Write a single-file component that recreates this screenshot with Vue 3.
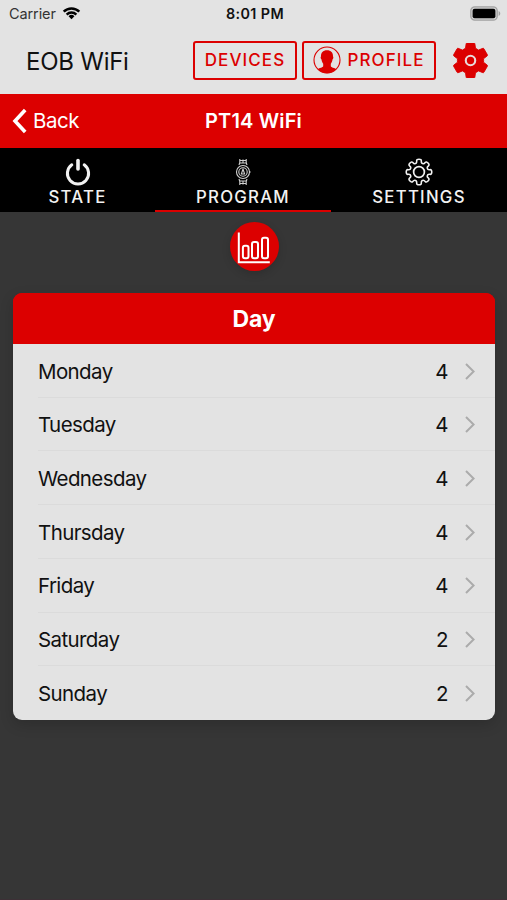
<template>
  <div class="app">
    <div class="status-bar">
      <div class="carrier">
        <span class="carrier-name">Carrier</span>
        <svg class="wifi" viewBox="0 0 20 14">
          <path d="M1.8 5.6a11.6 11.6 0 0 1 16.4 0" />
          <path d="M4.9 8.7a7.2 7.2 0 0 1 10.2 0" />
          <path class="wifi-dot" d="M10 13.6L6.9 10.5a4.4 4.4 0 0 1 6.2 0z" />
        </svg>
      </div>
      <span class="clock">8:01 PM</span>
      <svg class="battery" viewBox="0 0 31 15">
        <rect x="0.8" y="0.8" width="26.4" height="13.4" rx="4" fill="#d0d0d0" stroke="#a2a2a2" stroke-width="1.3" />
        <rect x="2.6" y="2.7" width="22.8" height="9.6" rx="2" fill="#000" />
        <path d="M28.6 5c2.2.9 2.2 4.1 0 5z" fill="#a2a2a2" />
      </svg>
    </div>

    <header class="header">
      <h1 class="title">EOB WiFi</h1>
      <button class="outline-btn devices">
        <span class="btn-text">DEVICES</span>
      </button>
      <button class="outline-btn profile">
        <svg class="avatar" viewBox="0 0 28 28">
          <circle cx="14" cy="14" r="13" fill="none" stroke="currentColor" stroke-width="1.1" />
          <path
            d="M14 4.200c4 0 6.200 2.400 6 6.200.6.300.4 2.500-.5 3-.3 2-1 3.400-1.700 4.300v2.600c.5 1.400 3.800 1.500 5.500 3A13 13 0 0 1 14 27.300a13 13 0 0 1-9.300-4c1.700-1.500 5-1.600 5.500-3v-2.600c-.7-.9-1.400-2.300-1.700-4.300-.9-.5-1.100-2.700-.5-3-.2-3.800 2-6.200 6-6.200z"
            fill="currentColor"
          />
        </svg>
        <span class="btn-text">PROFILE</span>
      </button>
      <svg class="cog" viewBox="2 2 20 20">
        <path
          d="M19.430 12.980c.040-.320.070-.640.070-.980s-.030-.660-.070-.980l2.110-1.650c.190-.150.240-.420.120-.640l-2-3.460c-.120-.220-.390-.300-.610-.220l-2.490 1c-.520-.400-1.080-.730-1.690-.980l-.380-2.650C14.460 2.180 14.250 2 14 2h-4c-.250 0-.460.180-.490.420l-.380 2.650c-.610.250-1.170.590-1.690.980l-2.490-1c-.230-.090-.490 0-.610.220l-2 3.460c-.130.220-.070.490.120.640l2.110 1.650c-.040.320-.070.650-.070.980s.030.660.070.980l-2.110 1.650c-.190.150-.240.420-.120.640l2 3.460c.120.220.390.300.610.220l2.490-1c.520.400 1.080.730 1.690.980l.380 2.650c.030.240.240.420.490.420h4c.250 0 .460-.180.490-.420l.380-2.650c.610-.250 1.170-.590 1.690-.980l2.490 1c.230.090.490 0 .610-.220l2-3.460c.120-.220.070-.490-.120-.640l-2.110-1.650z"
          fill="currentColor"
          stroke="currentColor"
          stroke-width="0.5"
          stroke-linejoin="round"
        />
        <circle cx="12" cy="12" r="2.700" fill="none" stroke="#e8dcdc" stroke-width="1.200" />
      </svg>
    </header>

    <nav class="nav-bar">
      <a class="back">
        <svg class="back-icon" viewBox="0 0 16 26">
          <path d="M13.200 2L3 13l10.200 11" />
        </svg>
        <span class="back-text">Back</span>
      </a>
      <span class="nav-title">PT14 WiFi</span>
    </nav>

    <div class="tabs">
      <div v-for="tab in tabs" :key="tab.id" :class="['tab', { active: tab.id === activeTab }]">
        <svg v-if="tab.id === 'state'" class="tab-icon" viewBox="-14 -14 28 28">
          <path d="M-6.200-7.200a10.600 10.600 0 1 0 12.400 0" stroke-width="3" stroke-linecap="round" />
          <path d="M0-11.500V-3" stroke-width="3.600" stroke-linecap="round" />
        </svg>
        <svg v-else-if="tab.id === 'program'" class="tab-icon watch" viewBox="-14 -14 28 28">
          <path d="M-3.200-13v3.500l-.800 2.500M3.200-13v3.500l.800 2.500M-3.200 13v-3.500l-.800-2.500M3.200 13v-3.500l.800-2.500" />
          <path d="M-3-11.500h6M-3-9h6M-3 9h6M-3 11.500h6M0-12.500v4M0 12.500v-4" />
          <circle r="6.500" />
          <circle r="4.200" />
          <path d="M0-3L1.600 2h-3.200zM6.800-1v2" />
        </svg>
        <svg v-else class="tab-icon" viewBox="-14 -14 28 28">
          <path :d="gearPath" stroke-width="1.600" />
          <circle r="5.400" stroke-width="1.700" />
        </svg>
        <span class="tab-text">{{ tab.label }}</span>
      </div>
    </div>

    <main class="content">
      <button class="chart-btn">
        <svg class="chart" viewBox="0 0 34 34">
          <path d="M1.800 2.500v29.700h31" />
          <rect x="5.900" y="15.700" width="5.600" height="12.600" rx="2" />
          <rect x="15" y="12" width="6" height="16.300" rx="2" />
          <rect x="25" y="7.700" width="6" height="20.600" rx="2" />
        </svg>
      </button>

      <section class="card">
        <h2 class="card-title">Day</h2>
        <ul class="days">
          <li v-for="day in days" :key="day.name" class="day">
            <span class="day-name">{{ day.name }}</span>
            <span class="day-count">{{ day.count }}</span>
            <svg class="chevron" viewBox="0 0 10 17">
              <path d="M1 1l7.600 7.500L1 16" />
            </svg>
          </li>
        </ul>
      </section>
    </main>
  </div>
</template>

<script setup>
import { ref } from 'vue'

const activeTab = ref('program')

const tabs = [
  { id: 'state', label: 'STATE' },
  { id: 'program', label: 'PROGRAM' },
  { id: 'settings', label: 'SETTINGS' }
]

const days = [
  { name: 'Monday', count: 4 },
  { name: 'Tuesday', count: 4 },
  { name: 'Wednesday', count: 4 },
  { name: 'Thursday', count: 4 },
  { name: 'Friday', count: 4 },
  { name: 'Saturday', count: 2 },
  { name: 'Sunday', count: 2 }
]

// eight rounded teeth: quadratic curves through the midpoints of [angle, radius] points
const tooth = [[-13, 9.6], [-11, 13], [11, 13], [13, 9.6], [22.5, 9]]
const points = []
for (let i = 0; i < 8; i++) {
  for (const [offset, r] of tooth) {
    const a = ((i * 45 + offset) * Math.PI) / 180
    points.push([r * Math.sin(a), -r * Math.cos(a)])
  }
}
const mid = (p, q) => `${((p[0] + q[0]) / 2).toFixed(2)} ${((p[1] + q[1]) / 2).toFixed(2)}`
const gearPath =
  `M${mid(points[points.length - 1], points[0])}` +
  points
    .map((p, i) => `Q${p[0].toFixed(2)} ${p[1].toFixed(2)} ${mid(p, points[(i + 1) % points.length])}`)
    .join('') +
  'Z'
</script>

<style>
body {
  background: #363636;
}
</style>

<style scoped>
.app {
  --red: #dc0000;
  --light: #e3e3e3;
  box-sizing: border-box;
  height: 900px;
  overflow: hidden;
  border-bottom: 1px solid #3d3036;
  background: #363636;
  font-family: Inter, "Liberation Sans", sans-serif;
  color: #111;
}

button {
  font-family: inherit;
  padding: 0;
  cursor: pointer;
}

svg {
  display: block;
  flex-shrink: 0;
}

.status-bar {
  display: grid;
  grid-template-columns: 1fr auto 1fr;
  align-items: center;
  height: 27px;
  padding: 0 6px 0 9px;
  background: var(--light);
}

.carrier {
  display: flex;
  align-items: center;
  gap: 6px;
}

.carrier-name {
  font-size: 14.5px;
  letter-spacing: -0.1px;
  color: #333;
}

.wifi {
  width: 19px;
  height: 14px;
  margin-top: -2px;
  fill: none;
  stroke: #000;
  stroke-width: 2.6;
}

.wifi .wifi-dot {
  fill: #000;
  stroke: none;
}

.clock {
  font-size: 14.3px;
  font-weight: 600;
  letter-spacing: 0.4px;
}

.battery {
  width: 31px;
  height: 15px;
  justify-self: end;
}

.header {
  display: flex;
  align-items: center;
  box-sizing: border-box;
  height: 67px;
  padding: 0 19px 1px 26px;
  background: var(--light);
}

.title {
  flex: 1;
  margin: 2px 0 0;
  font-size: 24px;
  font-weight: 400;
  letter-spacing: -0.25px;
}

.outline-btn {
  display: flex;
  align-items: center;
  justify-content: center;
  box-sizing: border-box;
  height: 39px;
  border: 2px solid var(--red);
  border-radius: 3px;
  background: none;
  color: var(--red);
  font-size: 17px;
  font-weight: 500;
}

.btn-text {
  letter-spacing: 1.1px;
}

.devices {
  width: 104px;
}

.profile {
  width: 134px;
  margin: 0 17px 0 5px;
  gap: 6px;
}

.avatar {
  width: 28px;
  height: 28px;
}

.cog {
  width: 35px;
  height: 35px;
  color: var(--red);
}

.nav-bar {
  display: grid;
  grid-template-columns: 1fr auto 1fr;
  align-items: center;
  box-sizing: border-box;
  height: 54px;
  padding: 0 12px 1px;
  background: var(--red);
  color: #fff;
}

.back {
  display: flex;
  align-items: center;
  gap: 5px;
}

.back-icon {
  width: 16px;
  height: 26px;
  fill: none;
  stroke: #fff;
  stroke-width: 3.6;
}

.back-text {
  font-size: 20.5px;
  letter-spacing: -0.5px;
}

.nav-title {
  font-size: 20px;
  font-weight: 600;
  letter-spacing: 0.15px;
}

.tabs {
  display: flex;
  justify-content: center;
  height: 64px;
  background: #000;
}

.tab {
  display: flex;
  flex-direction: column;
  align-items: center;
  box-sizing: border-box;
  width: 176px;
  padding-top: 10px;
  border-bottom: 2px solid transparent;
  color: #f2f2f2;
}

.tab:first-child {
  width: 155px;
}

.tab.active {
  border-bottom-color: var(--red);
}

.tab-icon {
  width: 28px;
  height: 28px;
  fill: none;
  stroke: #f2f2f2;
  stroke-linejoin: round;
}

.watch {
  stroke: #cfcfcf;
  stroke-width: 1.1;
}

.tab-text {
  margin-top: 1px;
  font-size: 16.8px;
  line-height: 20px;
  font-weight: 500;
  letter-spacing: 1.25px;
}

.content {
  display: flex;
  flex-direction: column;
  align-items: center;
  padding: 10px 12px 0 13px;
}

.chart-btn {
  display: flex;
  align-items: center;
  justify-content: center;
  width: 49px;
  height: 49px;
  border: none;
  border-radius: 50%;
  background: var(--red);
  box-shadow: 0 3px 8px rgba(0, 0, 0, 0.15);
}

.chart {
  width: 34px;
  height: 34px;
  fill: none;
  stroke: #fff;
  stroke-width: 2;
}

.card {
  align-self: stretch;
  margin-top: 22px;
  border-radius: 9px;
  overflow: hidden;
  background: linear-gradient(var(--red) 30px, var(--light) 30px);
  box-shadow: 0 5px 14px rgba(0, 0, 0, 0.16);
}

.card-title {
  display: flex;
  align-items: center;
  justify-content: center;
  height: 51px;
  margin: 0;
  background: var(--red);
  color: #fff;
  font-size: 23px;
  font-weight: 700;
  letter-spacing: -0.1px;
}

.days {
  margin: 0;
  padding: 0 0 0 25px;
  list-style: none;
}

.day {
  display: flex;
  align-items: center;
  box-sizing: border-box;
  height: 53.72px;
  padding: 1.5px 20px 0 0;
  border-bottom: 1px solid #dbdbdb;
  font-size: 20.5px;
}

.day:last-child {
  border-bottom: none;
}

.day-name {
  flex: 1;
  letter-spacing: -0.6px;
}

.chevron {
  width: 10px;
  height: 17px;
  margin-left: 16.5px;
  fill: none;
  stroke: #ababab;
  stroke-width: 2;
}
</style>
